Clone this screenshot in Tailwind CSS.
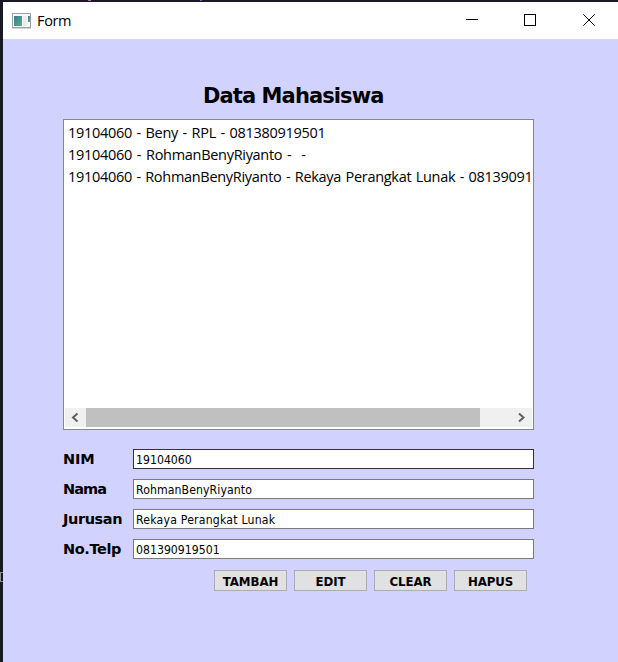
<!DOCTYPE html>
<html lang="id">
<head>
<meta charset="utf-8">
<title>Form</title>
<script src="https://cdn.jsdelivr.net/npm/@tailwindcss/browser@4"></script>
</head>
<body class="relative h-[662px] w-[618px] overflow-hidden bg-[#191923] pt-[2px] pl-[3px] text-black">
<i class="absolute top-0 left-[88px] h-px w-[3px] bg-[#b06ab0]"></i>
<i class="absolute top-0 left-[200px] h-px w-[2px] bg-[#7060b0]"></i>
<i class="absolute top-[572px] left-0 h-[10px] w-[3px] border-y border-l border-y-[#7f87b5] border-l-[#96908a]"></i>
<main class="flex h-[660px] w-[615px] flex-col bg-[#d2d2ff]">
  <header class="flex h-[37px] shrink-0 items-center bg-white pl-[9px]">
    <svg class="h-[16px] w-[19px] shrink-0" viewBox="0 0 19 16">
      <defs><linearGradient id="g" x1="0" y1="0" x2="1" y2="1"><stop offset="0" stop-color="#3f77a0"/><stop offset="1" stop-color="#55b072"/></linearGradient></defs>
      <rect x=".5" y=".5" width="18" height="14" fill="#f7f8f8" stroke="#9aa0a8"/>
      <path d="M0 15.5h19" stroke="#d5d5d5"/>
      <rect x="2" y="3" width="8" height="10" fill="url(#g)"/>
      <rect x="11" y="3" width="4" height="10" fill="#e9eceb"/>
      <rect x="16" y="3" width="2" height="6" fill="url(#g)"/>
    </svg>
    <span class="ml-[6px] font-['Open_Sans',sans-serif] text-[14.5px] leading-[20px] tracking-[-0.35px]">Form</span>
    <svg class="ml-auto h-[37px] w-[176px]" viewBox="0 0 176 37" fill="none" stroke="#000" shape-rendering="crispEdges">
      <path d="M24 17.5h12M82.5 12.5h11v11h-11z"/>
      <path d="M141.3 12.3l11.4 11.4M152.7 12.3l-11.4 11.4" shape-rendering="auto"/>
    </svg>
  </header>
  <section class="flex flex-col pt-[43px] pl-[60px]">
    <h1 class="h-[37px] pl-[140px] font-['DejaVu_Sans',sans-serif] text-[21px] leading-[28px] font-bold tracking-[-0.9px] whitespace-nowrap">Data Mahasiswa</h1>
    <div class="flex h-[311px] w-[471px] flex-col border border-[#828790] bg-white p-px">
      <ul class="h-[287px] overflow-hidden pt-px pl-[3px] font-['Open_Sans',sans-serif] text-[14.5px] leading-[22px] tracking-[-0.3px] [word-spacing:1.15px]">
        <li class="whitespace-pre">19104060 - Beny - RPL - 081380919501</li>
        <li class="whitespace-pre [word-spacing:1.4px]">19104060 - RohmanBenyRiyanto -  -</li>
        <li class="whitespace-pre [word-spacing:1px]">19104060 - RohmanBenyRiyanto - Rekaya Perangkat Lunak - 08139091</li>
      </ul>
      <div class="flex h-[19px] bg-[#f0f0f0]">
        <svg class="h-[19px] w-[21px]" viewBox="0 0 21 19" fill="none" stroke="#606060" stroke-width="2"><path d="M12.5 5.500L8 9.500l4.500 4"/></svg>
        <div class="w-[394px] bg-[#c0c0c0]"></div>
        <svg class="ml-auto h-[19px] w-[21px]" viewBox="0 0 21 19" fill="none" stroke="#606060" stroke-width="2"><path d="M8 5.500l4.500 4-4.500 4"/></svg>
      </div>
    </div>
    <form class="mt-[19px] flex w-[471px] flex-col gap-[10px] font-['DejaVu_Sans_Condensed','DejaVu_Sans',sans-serif]">
      <div class="flex h-[20px]"><label class="w-[70px] font-['DejaVu_Sans',sans-serif] text-[14.5px] leading-[20px] font-bold tracking-[-0.2px]">NIM</label><div class="flex-1 border border-[#333333] bg-white pl-[2px] text-[12.2px] leading-[20px]">19104060</div></div>
      <div class="flex h-[20px]"><label class="w-[70px] font-['DejaVu_Sans',sans-serif] text-[14.5px] leading-[20px] font-bold tracking-[-0.9px]">Nama</label><div class="flex-1 border border-[#7a7a7a] bg-white pl-[2px] text-[12.2px] leading-[20px] tracking-[0.08px]">RohmanBenyRiyanto</div></div>
      <div class="flex h-[20px]"><label class="w-[70px] font-['DejaVu_Sans',sans-serif] text-[14.5px] leading-[20px] font-bold tracking-[-0.4px]">Jurusan</label><div class="flex-1 border border-[#7a7a7a] bg-white pl-[2px] text-[12.2px] leading-[20px] tracking-[0.2px]">Rekaya Perangkat Lunak</div></div>
      <div class="flex h-[20px]"><label class="w-[70px] font-['DejaVu_Sans',sans-serif] text-[14.5px] leading-[20px] font-bold tracking-[-0.4px]">No.Telp</label><div class="flex-1 border border-[#7a7a7a] bg-white pl-[2px] text-[12.2px] leading-[20px]">081390919501</div></div>
      <div class="mt-px flex gap-[7px] pl-[151px] font-['DejaVu_Sans',sans-serif] text-[11.8px] leading-[19px] font-bold tracking-[-0.1px]">
        <button type="button" class="h-[21px] w-[73px] border border-[#adadad] bg-[#e1e1e1] pt-[2px]">TAMBAH</button>
        <button type="button" class="h-[21px] w-[73px] border border-[#adadad] bg-[#e1e1e1] pt-[2px]">EDIT</button>
        <button type="button" class="h-[21px] w-[73px] border border-[#adadad] bg-[#e1e1e1] pt-[2px]">CLEAR</button>
        <button type="button" class="h-[21px] w-[73px] border border-[#adadad] bg-[#e1e1e1] pt-[2px]">HAPUS</button>
      </div>
    </form>
  </section>
</main>
</body>
</html>
